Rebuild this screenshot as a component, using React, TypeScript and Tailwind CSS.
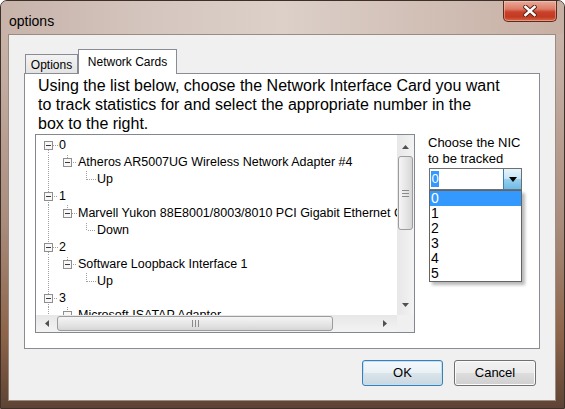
import React from 'react'

type TreeRow = { level: number; text: string; box?: boolean; first?: boolean }

const rows: TreeRow[] = [
  { level: 0, text: '0', box: true, first: true },
  { level: 1, text: 'Atheros AR5007UG Wireless Network Adapter #4', box: true },
  { level: 2, text: 'Up' },
  { level: 0, text: '1', box: true },
  { level: 1, text: 'Marvell Yukon 88E8001/8003/8010 PCI Gigabit Ethernet Controller', box: true },
  { level: 2, text: 'Down' },
  { level: 0, text: '2', box: true },
  { level: 1, text: 'Software Loopback Interface 1', box: true },
  { level: 2, text: 'Up' },
  { level: 0, text: '3', box: true },
  { level: 1, text: 'Microsoft ISATAP Adapter', box: true },
]

const DOT = '#a0a0a0'

function Connector({ row, index }: { row: TreeRow; index: number }) {
  const w = 22 + row.level * 19
  const c = 12 + row.level * 19
  const off = index % 2
  const dotted = { stroke: DOT, strokeWidth: 1, strokeDasharray: '1 1', strokeDashoffset: off }
  return (
    <svg width={w} height={17} className="shrink-0">
      {/* trunk for level 0 */}
      {row.level === 0 ? (
        <>
          {!row.first && <line x1={12.5} y1={0} x2={12.5} y2={4} {...dotted} />}
          <line x1={12.5} y1={13} x2={12.5} y2={17} {...dotted} />
        </>
      ) : (
        <line x1={12.5} y1={0} x2={12.5} y2={17} {...dotted} />
      )}
      {row.level > 0 && row.box && <line x1={c + 0.5} y1={0} x2={c + 0.5} y2={4} {...dotted} />}
      {row.box ? (
        <>
          <line x1={c + 5} y1={8.5} x2={w} y2={8.5} {...dotted} />
          <rect x={c - 4 + 0.5} y={4.5} width={8} height={8} fill="#f7f7f7" stroke="#8f8f8f" />
          <line x1={c - 2} y1={8.5} x2={c + 3} y2={8.5} stroke="#3a3a3a" />
        </>
      ) : (
        <>
          <line x1={c + 0.5} y1={0} x2={c + 0.5} y2={9} {...dotted} />
          <line x1={c + 1} y1={8.5} x2={w} y2={8.5} {...dotted} />
        </>
      )}
    </svg>
  )
}

function Arrow({ dir }: { dir: 'up' | 'down' | 'left' | 'right' }) {
  const pts = {
    up: '0,4 3.5,0 7,4',
    down: '0,0 7,0 3.5,4',
    left: '4,0 4,7 0,3.5',
    right: '0,0 4,3.5 0,7',
  }[dir]
  const vert = dir === 'up' || dir === 'down'
  return (
    <svg width={vert ? 7 : 4} height={vert ? 4 : 7}>
      <polygon points={pts} fill="#505050" />
    </svg>
  )
}

function CloseButton() {
  return (
    <div className="mr-[7px] w-[54px] h-[21px] rounded-b-[5px] border border-t-0 border-[#5c2a1f] bg-[linear-gradient(180deg,#e9ab9b_0%,#dc7c66_40%,#c8412a_55%,#c23a22_80%,#d86a48_100%)] shadow-[inset_0_0_0_1px_rgba(255,210,200,0.45)] flex items-center justify-center">
      <svg width={14} height={12} viewBox="0 0 14 12">
        <g strokeLinecap="square">
          <line x1={2.5} y1={2} x2={11.5} y2={10} stroke="#5a2418" strokeWidth={4.5} />
          <line x1={2.5} y1={10} x2={11.5} y2={2} stroke="#5a2418" strokeWidth={4.5} />
          <line x1={2.5} y1={2} x2={11.5} y2={10} stroke="#ffffff" strokeWidth={2.6} />
          <line x1={2.5} y1={10} x2={11.5} y2={2} stroke="#ffffff" strokeWidth={2.6} />
        </g>
      </svg>
    </div>
  )
}

export default function App() {
  return (
    <div className="w-[565px] h-[409px] overflow-hidden font-['Liberation_Sans',Arial,sans-serif] text-black">
      <div className="w-full h-full flex flex-col rounded-t-[7px] border border-[#3d3029] bg-[linear-gradient(180deg,#cdb9b0_0%,#c2aba0_20%,#a88b7b_55%,#8d6449_82%,#5e4334_100%)]">
        {/* Title bar */}
        <div className="h-[33px] shrink-0 flex justify-between rounded-t-[6px] bg-[linear-gradient(90deg,#c7b3aa_0%,#d6c8c1_30%,#dcd0c9_50%,#cfbcb2_80%,#c8afa4_100%)]">
          <span className="mt-[11px] ml-[8px] text-[14px] leading-[18px]">options</span>
          <CloseButton />
        </div>

        {/* Client area */}
        <div className="ml-[7px] w-[548px] h-[367px] shrink-0 bg-[#f0f0f0] border border-[#9c8b81] flex flex-col pt-[14px] pl-[15px]">
          {/* Tabs */}
          <div className="h-[24px] flex items-end pl-[1px] text-[12px]">
            <div className="w-[53px] h-[19px] border border-b-0 border-[#898c95] bg-[linear-gradient(180deg,#f3f3f3,#e3e3e3)] flex items-center justify-center pt-[1px]">
              Options
            </div>
            <div className="w-[99px] h-[25px] -mb-[1px] relative z-10 border border-b-0 border-[#898c95] bg-white flex items-start justify-center pt-[3px]">
              Network Cards
            </div>
          </div>

          {/* Tab page */}
          <div className="w-[516px] h-[276px] border border-[#898c95] bg-white">
            <div className="pl-[13px] pt-[2px] text-[16px] leading-[19px] whitespace-nowrap">
              Using the list below, choose the Network Interface Card you want
              <br />
              to track statistics for and select the appropriate number in the
              <br />
              box to the right.
            </div>

            <div className="flex items-start mt-[1px] pl-[10px]">
              {/* Tree view */}
              <div className="w-[380px] h-[199px] border border-[#828790] grid grid-cols-[1fr_17px] grid-rows-[1fr_17px] bg-white">
                <div className="overflow-hidden text-[12.5px] leading-[17px] pt-[2px]">
                  {rows.map((r, i) => (
                    <div key={i} className="h-[17px] flex items-center whitespace-nowrap">
                      <Connector row={r} index={i} />
                      <span className="pl-[1px]">{r.text}</span>
                    </div>
                  ))}
                </div>

                {/* vertical scrollbar */}
                <div className="flex flex-col bg-[linear-gradient(90deg,#e7e7e7,#f3f3f3)]">
                  <div className="h-[21px] flex items-center justify-center pt-[2px]">
                    <Arrow dir="up" />
                  </div>
                  <div className="h-[74px] mx-[1px] rounded-[3px] border border-[#9c9c9c] bg-[linear-gradient(90deg,#f5f5f5,#e4e4e4_60%,#d6d6d6)] flex flex-col items-center justify-center gap-[2px]">
                    <div className="w-[7px] h-px bg-[#8a8a8a]" />
                    <div className="w-[7px] h-px bg-[#8a8a8a]" />
                    <div className="w-[7px] h-px bg-[#8a8a8a]" />
                  </div>
                  <div className="flex-1" />
                  <div className="h-[21px] flex items-center justify-center">
                    <Arrow dir="down" />
                  </div>
                </div>

                {/* horizontal scrollbar */}
                <div className="flex bg-[linear-gradient(180deg,#e7e7e7,#f3f3f3)]">
                  <div className="w-[21px] flex items-center justify-center">
                    <Arrow dir="left" />
                  </div>
                  <div className="w-[276px] my-[1px] rounded-[3px] border border-[#9c9c9c] bg-[linear-gradient(180deg,#f5f5f5,#e4e4e4_60%,#d6d6d6)] flex items-center justify-center gap-[2px]">
                    <div className="h-[7px] w-px bg-[#8a8a8a]" />
                    <div className="h-[7px] w-px bg-[#8a8a8a]" />
                    <div className="h-[7px] w-px bg-[#8a8a8a]" />
                  </div>
                  <div className="flex-1" />
                  <div className="w-[21px] flex items-center justify-center pr-[4px]">
                    <Arrow dir="right" />
                  </div>
                </div>
                <div className="bg-[#f0f0f0]" />
              </div>

              {/* NIC chooser */}
              <div className="ml-[13px] pt-[1px] text-[13px] leading-[16px]">
                <div>Choose the NIC</div>
                <div>to be tracked</div>
                <div className="relative mt-[1px] ml-[1px] w-[93px] h-[22px] border border-[#6f6f6f] bg-white flex">
                  <div className="flex-1 pl-[1px] pt-[2px]">
                    <div className="w-[8px] h-[16px] bg-[#3399ff] text-white leading-[16px] text-center">0</div>
                  </div>
                  <div className="w-[18px] h-full border-l border-[#3c7fb1] bg-[linear-gradient(180deg,#e5f4fc_0%,#c4e5f6_50%,#98d1ef_50%,#6fbbe6_100%)] flex items-center justify-center">
                    <svg width={8} height={5}>
                      <polygon points="0,0 8,0 4,5" fill="#000" />
                    </svg>
                  </div>

                  {/* open dropdown list */}
                  <div className="absolute left-[-1px] top-[21px] w-[93px] border border-[#646464] bg-white shadow-[3px_3px_3px_rgba(0,0,0,0.28)] z-20 text-[14px]">
                    {['0', '1', '2', '3', '4', '5'].map((n, i) => (
                      <div
                        key={n}
                        className={i === 0 ? 'h-[15px] leading-[15px] pl-[1px] bg-[#3399ff] text-white' : 'h-[15px] leading-[15px] pl-[1px]'}
                      >
                        {n}
                      </div>
                    ))}
                  </div>
                </div>
              </div>
            </div>
          </div>

          {/* Buttons */}
          <div className="w-[512px] mt-[11px] flex justify-end gap-[11px] text-[13px]">
            <button className="w-[81px] h-[26px] rounded-[3px] border border-[#3c7fb1] bg-[linear-gradient(180deg,#f4f8fb_0%,#eaf1f6_48%,#d9e3ea_52%,#cbd8e1_100%)] shadow-[inset_0_0_0_1px_#bfe1f7]">
              OK
            </button>
            <button className="w-[82px] h-[26px] rounded-[3px] border border-[#707070] bg-[linear-gradient(180deg,#f2f2f2_0%,#ebebeb_48%,#dddddd_52%,#cfcfcf_100%)] shadow-[inset_0_0_0_1px_#fbfbfb]">
              Cancel
            </button>
          </div>
        </div>
      </div>
    </div>
  )
}
